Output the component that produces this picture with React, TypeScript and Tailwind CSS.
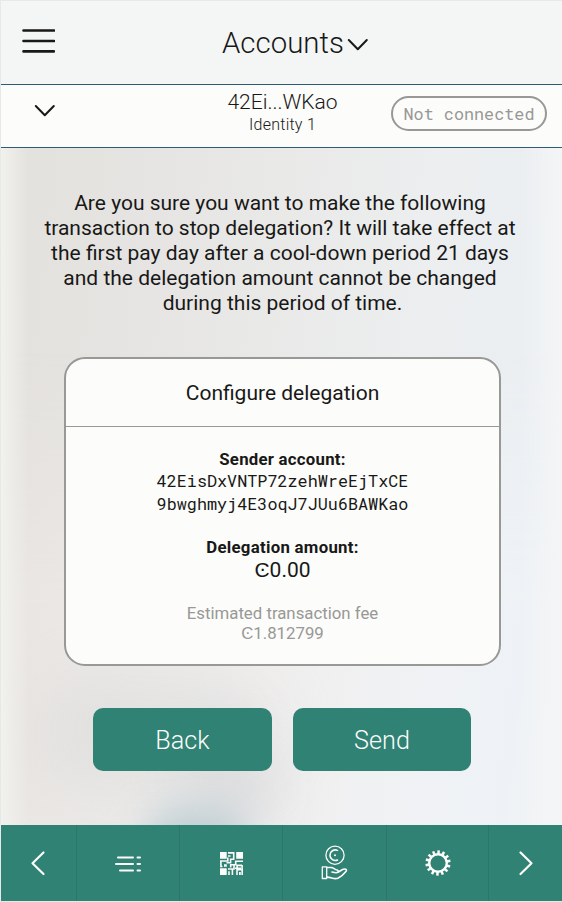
import React from 'react';

const Chevron = ({ className }: { className?: string }) => (
  <svg className={className} width="22" height="14" viewBox="0 0 22 14" fill="none" stroke="#181817" strokeWidth="2" strokeLinecap="round" strokeLinejoin="round">
    <path d="M1.8 2 10.8 11.2 19.8 2" />
  </svg>
);

const gearTeeth = Array.from({ length: 14 }, (_, i) => i * (360 / 14));

function NavCell({ className, children }: { className: string; children: React.ReactNode }) {
  return <div className={`flex items-center justify-center border-[#2b776a] pr-px ${className}`}>{children}</div>;
}

function Backdrop() {
  return (
    <div className="absolute inset-0 overflow-hidden bg-[linear-gradient(97deg,#e3e1dc_0%,#e5e4e2_22%,#e9e9e8_45%,#eceeef_68%,#ebeff3_90%,#f1f3f5_100%)]">
      <div className="absolute inset-x-0 top-[200px] bottom-0 bg-[linear-gradient(97deg,#e9e4e0_0%,#ebe9e7_25%,#f0efee_50%,#f0f2f5_78%,#eef2f6_90%,#f3f4f5_100%)] [mask-image:linear-gradient(to_bottom,transparent,black_260px)]" />
      <div className="absolute top-[540px] left-[40px] h-[90px] w-[230px] rounded-full bg-[#d9dbdb]/60 blur-[32px]" />
      <div className="absolute top-[595px] left-[180px] h-[90px] w-[100px] rounded-full bg-[#d3d6d9]/60 blur-[26px]" />
      <div className="absolute top-[662px] left-[145px] h-[60px] w-[100px] rounded-full bg-[#b9cbd1]/90 blur-[18px]" />
      <div className="absolute inset-y-0 left-0 w-7 bg-linear-to-r from-[#f1f1ee] to-transparent" />
      <div className="absolute inset-y-0 right-0 w-10 bg-linear-to-l from-[#f4f5f6] to-transparent" />
    </div>
  );
}

export default function App() {
  return (
    <div className="flex h-[902px] w-[562px] flex-col border-t border-b border-l border-[#e7e8e8] font-['Roboto',sans-serif] text-[#181817]">
      <header className="flex h-[84px] shrink-0 items-center border-b border-[#2f5b77] bg-[#f4f6f5] pl-[21px]">
        <svg className="mb-[3px]" width="33" height="26" viewBox="0 0 33 26" stroke="#181817" strokeWidth="2.6" strokeLinecap="round">
          <path d="M1.5 2.5h30.5M1.5 13h30.5M1.5 23.4h30.5" />
        </svg>
        <h1 className="mt-[2px] ml-[167px] text-[29.4px] leading-none font-light">Accounts</h1>
        <Chevron className="mt-[4px] ml-[3px]" />
      </header>

      <section className="grid h-[63px] shrink-0 grid-cols-[187px_189px_185px] border-b border-[#2f5b77] bg-[#fcfcfa]">
        <Chevron className="mt-[19px] ml-[33px]" />
        <div className="pt-[5px] text-center">
          <div className="text-[21px] leading-[25px] font-light">42Ei...WKao</div>
          <div className="text-[16px] leading-[20px] font-light tracking-[0.25px]">Identity 1</div>
        </div>
        <div className="mt-[11px] ml-[14px] flex h-[35px] w-[156px] items-center justify-center rounded-full border-2 border-[#989896] font-['Roboto_Mono','Liberation_Mono',monospace] text-[16.8px] text-[#989896]">
          Not connected
        </div>
      </section>

      <main className="relative flex grow flex-col">
        <Backdrop />
        <div className="relative flex flex-col items-center">
          <p className="mt-[43px] pr-[3px] text-center text-[21px] leading-[25px] whitespace-nowrap">
            Are you sure you want to make the following<br />
            transaction to stop delegation? It will take effect at<br />
            the first pay day after a cool-down period 21 days<br />
            and the delegation amount cannot be changed<br />
            <span className="pl-[5px]">during this period of time.</span>
          </p>
          <div className="mt-[41px] mr-[-2px] h-[309px] w-[437px] rounded-[21px] border-2 border-[#989896] bg-[#fcfcfa] text-center">
            <h2 className="h-[68px] border-b border-[#989896] text-[21px] leading-[69px]">Configure delegation</h2>
            <div className="pt-[21px] text-[16.8px]">
              <h5 className="leading-[22px] font-bold tracking-[0.24px]">Sender account:</h5>
              <div className="-mt-px font-['Roboto_Mono','Liberation_Mono',monospace] leading-[23px]">
                42EisDxVNTP72zehWreEjTxCE<br />9bwghmyj4E3oqJ7JUu6BAWKao
              </div>
              <h5 className="mt-[21px] leading-[22px] font-bold tracking-[0.28px]">Delegation amount:</h5>
              <div className="text-[21px] leading-[24px]">Ͼ0.00</div>
              <div className="mt-[21px] leading-[20px] text-[#989896]">
                Estimated transaction fee<br />Ͼ1.812799
              </div>
            </div>
          </div>
          <div className="mt-[42px] flex gap-[21px] pl-[1px] text-[25.2px] font-light text-[#fcfcfa]">
            <button className="h-[63px] w-[179px] rounded-[10px] bg-[#308274] pt-[2px]">Back</button>
            <button className="h-[63px] w-[178px] rounded-[10px] bg-[#308274] pt-[2px]">Send</button>
          </div>
        </div>
      </main>

      <nav className="flex h-[76px] shrink-0 bg-[#308274] text-[#fcfcfa]">
        <NavCell className="w-[76px] border-r">
          <svg width="16" height="26" viewBox="0 0 16 26" fill="none" stroke="currentColor" strokeWidth="2.2" strokeLinecap="round" strokeLinejoin="round"><path d="M13.5 2.5 2.5 13.2l11 10.8" /></svg>
        </NavCell>
        <NavCell className="w-[103px] border-r">
          <svg className="mt-[2px]" width="26" height="18" viewBox="0 0 26 18" stroke="currentColor" strokeWidth="2" strokeLinecap="round"><path d="M3 2.5h15M1 9h17M5 15.5h13M22.5 2.5h2.5M22.5 9h2.5M22.5 15.5h2.5" /></svg>
        </NavCell>
        <NavCell className="w-[103px] border-r">
          <svg className="mt-px ml-[2px]" width="23" height="23" viewBox="0 0 23 23" fill="none" stroke="currentColor" strokeWidth="1.6">
            <path d="M0 0h6.7v6.7H0zM16.2 0H23v6.7h-6.8zM0 16.3h6.7V23H0zM4 12.2h2.8v2.5H4zM19 20h1.8v3H19z" fill="currentColor" stroke="none" />
            <path d="M8 .9h5.7v6.3H10.6v3.6H6.5M8 4h2.5M0 9h7.8V5.6M.9 9v5.5h1.6M23 9.2h-7.3v3.6h-5v2.6M22.1 13.4h-5v3M22.1 13v4M15 16.2h6M8 17h6v-4M9 23v-3.8M12.4 23v-5.2M17 23v-5.3h5.2V23" />
          </svg>
        </NavCell>
        <NavCell className="w-[104px] border-r">
          <svg width="28" height="36" viewBox="0 0 28 36" fill="none" stroke="currentColor" strokeWidth="1.3" strokeLinecap="round" strokeLinejoin="round">
            <circle cx="15" cy="10.2" r="9.1" />
            <path d="M17.5 5.4A5.3 5.3 0 1 0 17.5 15" strokeWidth="1.6" />
            <circle cx="15" cy="10.2" r="1" fill="currentColor" stroke="none" />
            <path d="M2.3 21.8h4.4v11.7H2.3z" />
            <path d="M7 22.5h4.3c2 0 3 1.8 5 2.3 1.8.4 2.5 1.5 1.6 2.4-1 .9-3.5.4-5.9-.2M18 27.2l4.6-2.7c2.2-1.2 4.8 0 3.5 1.7-1.7 2.2-5.6 5.8-8.2 7-3.8 1.5-6.4-1-10.9-1.1" strokeWidth="1.6" />
          </svg>
        </NavCell>
        <NavCell className="w-[102px] border-r">
          <svg className="ml-[2px]" width="26" height="26" viewBox="-13 -13 26 26" stroke="currentColor" fill="none">
            <circle r="8.8" strokeWidth="2.4" />
            {gearTeeth.map((angle) => (
              <path key={angle} d="M0-12.6V-9" strokeWidth="2.5" transform={`rotate(${angle + 3})`} />
            ))}
          </svg>
        </NavCell>
        <NavCell className="w-[73px]">
          <svg className="ml-[2px]" width="16" height="26" viewBox="0 0 16 26" fill="none" stroke="currentColor" strokeWidth="2.2" strokeLinecap="round" strokeLinejoin="round"><path d="M2.5 2.5 13.5 13.2 2.5 24" /></svg>
        </NavCell>
      </nav>
    </div>
  );
}
